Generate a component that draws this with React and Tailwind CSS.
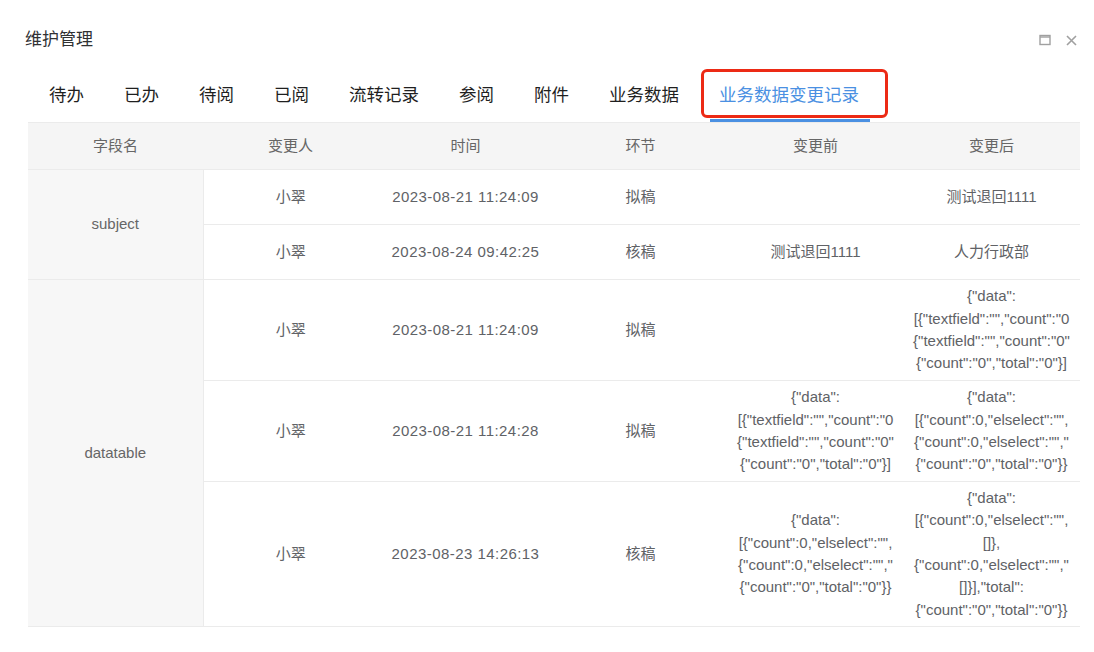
import React from 'react';

const FONT = { fontFamily: '"Liberation Sans", "Noto Sans CJK SC", sans-serif' };

const tabs = ['待办', '已办', '待阅', '已阅', '流转记录', '参阅', '附件', '业务数据', '业务数据变更记录'];

const textfieldJson = [
  '{"data":',
  '[{"textfield":"","count":"0',
  '{"textfield":"","count":"0"',
  '{"count":"0","total":"0"}]',
];

const elselectJson = [
  '{"data":',
  '[{"count":0,"elselect":"",',
  '{"count":0,"elselect":"","',
  '{"count":"0","total":"0"}}',
];

const elselectLong = [
  '{"data":',
  '[{"count":0,"elselect":"",',
  '[]},',
  '{"count":0,"elselect":"","',
  '[]}],"total":',
  '{"count":"0","total":"0"}}',
];

const rows = [
  { field: 'subject', span: 2, h: 'h-[55px]', user: '小翠', time: '2023-08-21 11:24:09', step: '拟稿', before: null, after: ['测试退回1111'] },
  { h: 'h-[55px]', user: '小翠', time: '2023-08-24 09:42:25', step: '核稿', before: ['测试退回1111'], after: ['人力行政部'] },
  { field: 'datatable', span: 3, h: 'h-[101px]', user: '小翠', time: '2023-08-21 11:24:09', step: '拟稿', before: null, after: textfieldJson },
  { h: 'h-[101px]', user: '小翠', time: '2023-08-21 11:24:28', step: '拟稿', before: textfieldJson, after: elselectJson },
  { h: 'h-[145px]', user: '小翠', time: '2023-08-23 14:26:13', step: '核稿', before: elselectJson, after: elselectLong },
];

const Lines = ({ lines }) => (
  <div className="overflow-hidden px-[7px]">
    {(lines || []).map((l, i) => (
      <div key={i} className="whitespace-nowrap text-center">{l}</div>
    ))}
  </div>
);

export default function App() {
  return (
    <div className="w-[1094px] h-[652px] bg-white overflow-hidden" style={FONT}>
      <div className="flex items-center justify-between pl-[25px] pr-[17px] pt-[28px]">
        <h1 className="text-[17px] leading-6 text-[#303133]">维护管理</h1>
        <div className="flex items-center gap-[15px] text-[#a0a0a0]">
          <svg width="12" height="12" viewBox="0 0 12 12" fill="none" stroke="currentColor" strokeWidth="1.4">
            <rect x="1" y="1.5" width="10" height="9" />
            <line x1="1" y1="3" x2="11" y2="3" />
          </svg>
          <svg width="11" height="11" viewBox="0 0 11 11" fill="none" stroke="currentColor" strokeWidth="1.6">
            <path d="M1 1L10 10M10 1L1 10" />
          </svg>
        </div>
      </div>

      <div className="mt-4 flex h-[54px] pl-[29px]">
        {tabs.map((t, i) => {
          const active = i === tabs.length - 1;
          return (
            <div
              key={t}
              className={`relative flex items-center px-5 text-[17.5px] ${active ? 'text-[#4a90e2]' : 'text-[#1f1f1f]'}`}
            >
              {t}
              {active && (
                <>
                  <div className="absolute left-[2px] top-[1px] h-[49px] w-[187px] rounded-[6px] border-[3px] border-[#ec2a15]" />
                  <div className="absolute left-[11px] top-[51px] h-[3px] w-[160px] bg-[#4a90e2]" />
                </>
              )}
            </div>
          );
        })}
      </div>

      <div className="ml-[28px] w-[1052px] overflow-hidden">
        <table className="w-[1052px] table-fixed border-collapse text-[15px] leading-[22.4px] text-[#606266]">
          <colgroup>
            <col className="w-[175px]" />
            <col className="w-[175px]" />
            <col className="w-[175px]" />
            <col className="w-[175px]" />
            <col className="w-[175px]" />
            <col className="w-[177px]" />
          </colgroup>
          <thead>
            <tr className="h-[47px] bg-[#f5f5f5] border-t border-b border-[#ebebeb]">
              {['字段名', '变更人', '时间', '环节', '变更前', '变更后'].map((h) => (
                <th key={h} className="font-normal text-center align-middle text-[#666]">{h}</th>
              ))}
            </tr>
          </thead>
          <tbody>
            {rows.map((r, i) => (
              <tr key={i} className={`${r.h} border-b border-[#ebebeb]`}>
                {r.field && (
                  <td rowSpan={r.span} className="bg-[#f7f7f7] border-r border-[#ebebeb] text-center align-middle text-[#666]">
                    {r.field}
                  </td>
                )}
                <td className="text-center align-middle">{r.user}</td>
                <td className="text-center align-middle tracking-[0.45px]">{r.time}</td>
                <td className="text-center align-middle">{r.step}</td>
                <td className="align-middle"><Lines lines={r.before} /></td>
                <td className="align-middle"><Lines lines={r.after} /></td>
              </tr>
            ))}
          </tbody>
        </table>
      </div>
    </div>
  );
}
